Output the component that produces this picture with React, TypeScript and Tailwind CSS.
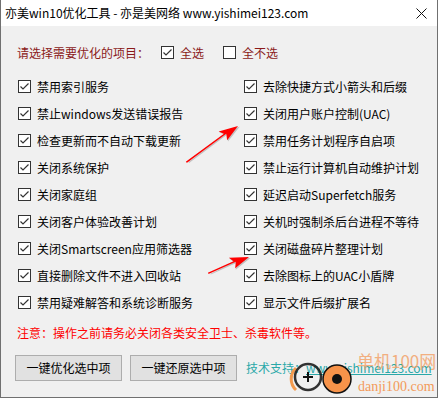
import React from "react";

const font = { fontFamily: '"Noto Sans CJK SC", "Noto Sans", sans-serif' };

const leftItems = [
  "禁用索引服务",
  "禁止windows发送错误报告",
  "检查更新而不自动下载更新",
  "关闭系统保护",
  "关闭家庭组",
  "关闭客户体验改善计划",
  "关闭Smartscreen应用筛选器",
  "直接删除文件不进入回收站",
  "禁用疑难解答和系统诊断服务",
];

const rightItems = [
  "去除快捷方式小箭头和后缀",
  "关闭用户账户控制(UAC)",
  "禁用任务计划程序自启项",
  "禁止运行计算机自动维护计划",
  "延迟启动Superfetch服务",
  "关机时强制杀后台进程不等待",
  "关闭磁盘碎片整理计划",
  "去除图标上的UAC小盾牌",
  "显示文件后缀扩展名",
];

const Box = ({ checked }: { checked: boolean }) => (
  <svg width="13" height="13" viewBox="0 0 13 13" className="shrink-0">
    <rect x="0.5" y="0.5" width="12" height="12" fill="#fff" stroke="#333" />
    {checked && (
      <path d="M2.5 6.5 L5 9 L10.5 3.5" fill="none" stroke="#333" strokeWidth="1.2" />
    )}
  </svg>
);

const Row = ({ text }: { text: string }) => (
  <div className="flex items-center h-[27px] gap-[6px]">
    <Box checked />
    <span className="text-[12px] text-black leading-none whitespace-nowrap">{text}</span>
  </div>
);

const Arrow = ({ x1, y1, x2, y2 }: { x1: number; y1: number; x2: number; y2: number }) => {
  const ang = Math.atan2(y2 - y1, x2 - x1);
  const len = Math.hypot(x2 - x1, y2 - y1);
  return (
    <svg
      className="absolute pointer-events-none"
      style={{ left: x1, top: y1 - 10, width: len + 4, height: 20, transformOrigin: "0 10px", transform: `rotate(${ang}rad)` }}
      viewBox={`0 0 ${len + 4} 20`}
    >
      <polygon
        points={`2,12.5 ${len - 14},11 ${len - 17},17 ${len + 1},11.5 ${len - 19},4 ${len - 16},9.5 2,11.5`}
        fill="#888"
        opacity="0.45"
      />
      <polygon
        points={`0,11.2 ${len - 14},9.6 ${len - 17},15.5 ${len},10 ${len - 19},3.5 ${len - 16},8.4 0,9.6`}
        fill="#f00"
      />
    </svg>
  );
};

export default function App() {
  return (
    <div className="relative w-[438px] h-[398px] bg-[#f0f0f0] border-x border-b border-[#707070] overflow-hidden" style={font}>
      <div className="h-[26px] bg-white flex items-center justify-between pl-[4px] pr-[10px]">
        <span className="text-[12px] text-black">亦美win10优化工具 - 亦是美网络 www.yishimei123.com</span>
        <svg width="11" height="11" viewBox="0 0 11 11">
          <path d="M0.5 0.5 L10.5 10.5 M10.5 0.5 L0.5 10.5" stroke="#111" strokeWidth="1" />
        </svg>
      </div>

      <div className="pl-[16px] pt-[20px]">
        <div className="flex items-center h-[13px] text-[12px] leading-none">
          <span className="text-[#8b1a1a]">请选择需要优化的项目：</span>
          <span className="ml-[12px] flex items-center gap-[6px]">
            <Box checked />
            <span className="text-[#8b1a1a]">全选</span>
          </span>
          <span className="ml-[19px] flex items-center gap-[6px]">
            <Box checked={false} />
            <span className="text-[#8b1a1a]">全不选</span>
          </span>
        </div>

        <div className="grid grid-cols-[226px_1fr] mt-[14px] pl-[1px]">
          <div className="flex flex-col">
            {leftItems.map((t) => (
              <Row key={t} text={t} />
            ))}
          </div>
          <div className="flex flex-col">
            {rightItems.map((t) => (
              <Row key={t} text={t} />
            ))}
          </div>
        </div>

        <div className="mt-[11px] text-[12px] text-[#ff0000] leading-none">
          注意：操作之前请务必关闭各类安全卫士、杀毒软件等。
        </div>

        <div className="flex items-center mt-[16px] ml-[-2px]">
          <button className="w-[107px] h-[26px] bg-[#e1e1e1] border border-[#adadad] text-[12px] text-black">
            一键优化选中项
          </button>
          <button className="ml-[8px] w-[107px] h-[26px] bg-[#e1e1e1] border border-[#adadad] text-[12px] text-black">
            一键还原选中项
          </button>
          <span className="ml-[9px] text-[12px] text-[#2aa8a8] whitespace-nowrap">
            技术支持：<span className="underline">www.yishimei123.com</span>
          </span>
        </div>
      </div>

      <Arrow x1={185} y1={162} x2={237} y2={126} />
      <Arrow x1={207} y1={273} x2={248} y2={257} />

      <svg className="absolute left-[288px] top-[360px] pointer-events-none" width="66" height="38" viewBox="0 0 66 38">
        <path d="M7 8 A15 15 0 0 0 7 30" fill="none" stroke="#f39a4e" strokeWidth="3" />
        <circle cx="19" cy="17" r="13" fill="none" stroke="#111" strokeWidth="2.5" opacity="0.85" />
        <path d="M14 17 H24 M19 12 V22" stroke="#111" strokeWidth="2" />
        <circle cx="48" cy="19" r="14" fill="#f7934a" stroke="#111" strokeWidth="1.5" />
        <circle cx="48" cy="19" r="5" fill="#111" />
      </svg>
      <div className="absolute left-[356px] top-[352px] text-[17px] leading-none text-[#f3a065] opacity-80 whitespace-nowrap pointer-events-none">
        单机100网
      </div>
      <div
        className="absolute left-[357px] top-[380px] text-[14px] leading-none text-[#f39a5a] whitespace-nowrap pointer-events-none"
        style={{ fontFamily: '"Liberation Serif", serif' }}
      >
        danji100.com
      </div>
    </div>
  );
}
